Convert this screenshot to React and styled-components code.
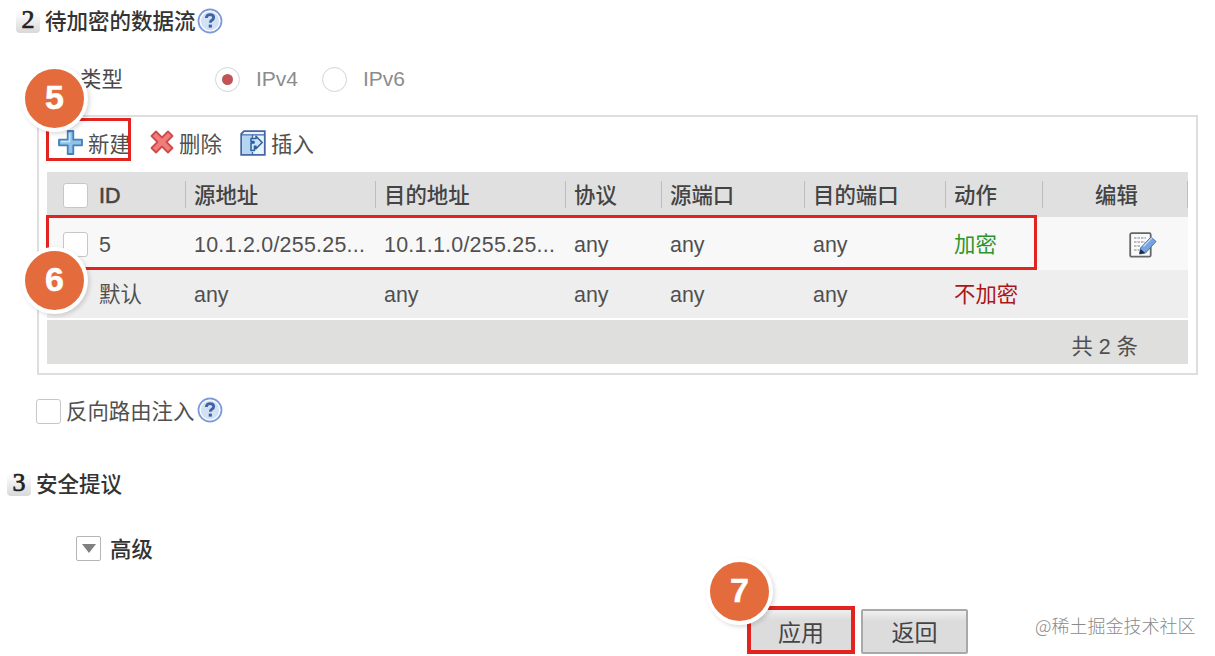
import React from 'react';
import styled, { createGlobalStyle, css } from 'styled-components';

const GlobalStyle = createGlobalStyle`
	* {
		box-sizing: border-box;
	}
	body {
		margin: 0;
		background: #fff;
		color: #505050;
		font-family: 'Liberation Sans', 'Noto Sans CJK SC', sans-serif;
		font-size: 21.4px;
		line-height: 30px;
	}
`;

const Page = styled.main`
	position: relative;
	width: 1215px;
	height: 656px;
	overflow: hidden;
`;

const SectionTitle = styled.h2`
	display: flex;
	align-items: center;
	height: 42px;
	margin: 0;
	padding: 1px 0 0 ${(props) => props.$indent}px;
	color: #333;
	font-size: 21.5px;
	font-weight: 500;
	white-space: nowrap;
	& > svg {
		margin: -1px 0 0 1px;
	}
`;

const StepNumber = styled.span`
	flex: none;
	width: 24px;
	height: 22px;
	margin-right: 5px;
	color: #222;
	font-family: 'Liberation Serif', serif;
	font-size: 26px;
	font-weight: 400;
	line-height: 18px;
	text-align: center;
	-webkit-text-stroke: 0.7px #222;
	background: linear-gradient(#fafafa 15%, #d8d8d8);
	border-radius: 4px;
`;

const TypeRow = styled.div`
	display: flex;
	align-items: center;
	height: 73px;
	padding: 1px 0 0 80px;
	color: #8c8c8c;
`;

const TypeLabel = styled.span`
	width: 135px;
	padding-top: 1px;
	color: #4a4a4a;
`;

const Radio = styled.span`
	display: grid;
	place-items: center;
	width: 25px;
	height: 25px;
	margin-right: 16px;
	border: 1.5px solid #d6d3d3;
	border-radius: 50%;
	&::after {
		content: '';
		width: 11px;
		height: 11px;
		border-radius: 50%;
		background: ${(props) => (props.$checked ? '#c25454' : 'transparent')};
	}
`;

const RadioLabel = styled.span`
	width: 66px;
	font-size: 21px;
`;

const Panel = styled.section`
	width: 1161px;
	height: 260px;
	margin-left: 37px;
	padding: 0 8px;
	border: 2px solid #dedede;
`;

const Toolbar = styled.div`
	display: flex;
	align-items: center;
	height: 55px;
	padding-left: 11px;
`;

const Tool = styled.span`
	display: flex;
	align-items: center;
	width: ${(props) => props.$width}px;
	white-space: nowrap;
	& > svg {
		flex: none;
		margin: -4px 5px 0 0;
	}
`;

const Row = styled.div`
	display: grid;
	grid-template-columns: 139px 190px 190px 96px 143px 141px 97px 145px;
	align-items: center;
	height: ${(props) => props.$height}px;
	background: ${(props) => props.$background};
`;

const Cell = styled.span`
	display: flex;
	align-items: center;
	padding: 2px 0 0 ${(props) => (props.$first ? 52 : 8)}px;
	color: ${(props) => props.$color || 'inherit'};
	white-space: nowrap;
	${(props) =>
		props.$check &&
		css`
			padding-left: 16px;
		`}
`;

const HeadCell = styled(Cell)`
	height: 27px;
	color: #444;
	font-weight: 500;
	border-right: 1px solid #bdbdbd;
	${(props) =>
		props.$center &&
		css`
			justify-content: center;
			padding-left: 3px;
		`}
`;

const IdLabel = styled.span`
	-webkit-text-stroke: 0.6px #444;
`;

const Address = styled.span`
	letter-spacing: 0.26px;
`;

const EditCell = styled.span`
	display: flex;
	justify-content: flex-end;
	padding: 3px 31px 0 0;
`;

const Checkbox = styled.span`
	flex: none;
	width: 25px;
	height: 25px;
	margin-right: ${(props) => props.$gap}px;
	background: #fff;
	border: 1.5px solid #c8c6c6;
	border-radius: 3px;
`;

const Footer = styled.div`
	display: flex;
	align-items: center;
	justify-content: flex-end;
	height: 44px;
	margin-top: 2px;
	padding: 9px 50px 0 0;
	background: #dfdfde;
`;

const OptionRow = styled.div`
	display: flex;
	align-items: center;
	height: 73px;
	margin-bottom: 15px;
	padding-left: 36px;
	& > svg {
		margin: -4px 0 0 3px;
	}
`;

const Advanced = styled.div`
	display: flex;
	align-items: center;
	height: 86px;
	padding-left: 76px;
	color: #333;
	font-weight: 500;
`;

const AdvancedLabel = styled.span`
	padding-top: 3px;
`;

const Toggle = styled.span`
	display: grid;
	place-items: center;
	width: 25px;
	height: 25px;
	margin-right: 9px;
	border: 1.5px solid #b5b5b5;
	border-radius: 2px;
	&::after {
		content: '';
		border: 7px solid transparent;
		border-top: 9px solid #808080;
		border-bottom: 0;
	}
`;

const Actions = styled.div`
	display: flex;
	align-items: flex-start;
	gap: 6px;
	padding: 15px 0 0 747px;
`;

const Button = styled.button`
	width: 108px;
	height: 48px;
	padding: 5px 0 0;
	color: #444;
	font: inherit;
	font-size: 23px;
	background: linear-gradient(#f0f0f0, #dcdcdc 25%);
	border: 4px solid #e2231f;
	${(props) =>
		!props.$marked &&
		css`
			width: 107px;
			height: 45px;
			margin-top: 3px;
			padding-top: 2px;
			border: 2px solid #a9a9a9;
			border-radius: 2px;
		`}
`;

const Watermark = styled.span`
	margin: 4px 0 0 61px;
	color: #8a8a8a;
	font-family: 'Noto Sans CJK SC', sans-serif;
	font-size: 18px;
	font-weight: 300;
	white-space: nowrap;
`;

// annotation overlays
const Outline = styled.div`
	position: absolute;
	left: ${(props) => props.$x}px;
	top: ${(props) => props.$y}px;
	width: ${(props) => props.$w}px;
	height: ${(props) => props.$h}px;
	border: 3px solid #e2231f;
`;

const Badge = styled.div`
	position: absolute;
	left: ${(props) => props.$x}px;
	top: ${(props) => props.$y}px;
	width: 67px;
	height: 67px;
	color: #fff;
	font-family: 'Liberation Sans', sans-serif;
	font-size: 34px;
	font-weight: 700;
	line-height: 57px;
	text-align: center;
	-webkit-text-stroke: 0.5px #fff;
	background: #e46c3c;
	border: 4px solid #fff;
	border-radius: 50%;
	box-shadow: 2px 2px 4px rgba(0, 0, 0, 0.14);
`;

const HelpIcon = () => (
	<svg width="26" height="26" viewBox="0 0 26 26">
		<circle cx="13" cy="13" r="11.5" fill="#d3e1f4" stroke="#7d9bd6" strokeWidth="1.8" />
		<circle cx="13" cy="13" r="9.8" fill="none" stroke="#f5faff" strokeWidth="1.3" />
		<path d="M9.3 10q.2-3.4 3.7-3.4 3.7 0 3.7 3 0 1.6-1.8 2.7-1.6 1-1.6 2.4" fill="none" stroke="#3f62a8" strokeWidth="2.8" />
		<rect x="11.7" y="16.6" width="3.2" height="3" fill="#3f62a8" />
	</svg>
);

const PlusIcon = () => (
	<svg width="25" height="25" viewBox="0 0 25 25">
		<path d="M9.7 1h5.6v8.7H24v5.6h-8.7V24H9.7v-8.7H1V9.7h8.7z" fill="#8fc4ea" stroke="#477fb6" strokeWidth="1.8" strokeLinejoin="round" />
		<path d="M11.5 3v8.5H3" fill="none" stroke="#c9e6f8" strokeWidth="1.5" />
	</svg>
);

const DeleteIcon = () => (
	<svg width="24" height="25" viewBox="0 0 24 25">
		<path d="M6 1.5l6 6 6-6 4.5 4.5-6 6 6 6-4.5 4.5-6-6-6 6L1.5 18l6-6-6-6z" fill="#f27c79" stroke="#cc4c4b" strokeWidth="1.8" strokeLinejoin="round" />
	</svg>
);

const InsertIcon = () => (
	<svg width="26" height="26" viewBox="0 0 26 26">
		<path d="M1.2 4L4 1.2h20.8v23.6H1.2z" fill="#eaf3fc" stroke="#4468a4" strokeWidth="1.8" />
		<path d="M2.2 5.5H12v18.4H2.2z" fill="#b4d5f1" />
		<path d="M1.5 4.8H24M12.5 5v4M12.5 22v3" fill="none" stroke="#4468a4" strokeWidth="1.3" />
		<path d="M11 8.5h5V6.200l6.200 6.300-6.200 6.300v-2.600h-1.500v4.300H11v-7.500h3v-1.500h-3z" fill="#c9e3f8" stroke="#2d5f9f" strokeWidth="1.5" strokeLinejoin="round" />
	</svg>
);

const EditIcon = () => (
	<svg width="28" height="26" viewBox="0 0 28 26">
		<rect x="1.2" y="1.2" width="20.5" height="23.5" rx="1.5" fill="#fafafa" stroke="#666" strokeWidth="1.8" />
		<path d="M5 6h12M5 10h11M5 14h7M5 18h5" stroke="#a5abb3" strokeWidth="1.4" strokeDasharray="2.5 1" />
		<path d="M11.5 16L22 5l5 4.5L16.500 21l-6 1z" fill="#76a4df" stroke="#4a71ad" strokeWidth="1" />
		<path d="M14.5 14.400l8.500-8.700" stroke="#b9d3f2" strokeWidth="1.5" />
		<path d="M11.500 17l4.500 4-5.500 1z" fill="#1f2b3d" />
	</svg>
);

const columns = ['源地址', '目的地址', '协议', '源端口', '目的端口', '动作'];

const rules = [
	{
		id: '5',
		values: ['10.1.2.0/255.25...', '10.1.1.0/255.25...', 'any', 'any', 'any'],
		action: '加密',
		color: '#2c962c',
		editable: true,
	},
	{
		id: '默认',
		values: ['any', 'any', 'any', 'any', 'any'],
		action: '不加密',
		color: '#ad1518',
	},
];

const RuleRow = ({ rule }) => (
	<Row
		$height={rule.editable ? 53 : 48}
		$background={rule.editable ? '#f8f8f8' : '#eeeeee'}
	>
		<Cell $check={rule.editable} $first>
			{rule.editable && <Checkbox $gap={11} />}
			{rule.id}
		</Cell>
		{rule.values.map((value, i) => (
			<Cell key={i}>
				{value === 'any' ? value : <Address>{value}</Address>}
			</Cell>
		))}
		<Cell $color={rule.color}>{rule.action}</Cell>
		<EditCell>{rule.editable && <EditIcon />}</EditCell>
	</Row>
);

const App = () => (
	<>
		<GlobalStyle />
		<Page>
			<SectionTitle $indent={16}>
				<StepNumber>2</StepNumber>
				待加密的数据流
				<HelpIcon />
			</SectionTitle>
			<TypeRow>
				<TypeLabel>类型</TypeLabel>
				<Radio $checked />
				<RadioLabel>IPv4</RadioLabel>
				<Radio />
				<RadioLabel>IPv6</RadioLabel>
			</TypeRow>

			<Panel>
				<Toolbar>
					<Tool $width={92}>
						<PlusIcon />
						新建
					</Tool>
					<Tool $width={90}>
						<DeleteIcon />
						删除
					</Tool>
					<Tool $width={80}>
						<InsertIcon />
						插入
					</Tool>
				</Toolbar>
				<Row $height={45} $background="#e0e0e0">
					<HeadCell $check>
						<Checkbox $gap={11} />
						<IdLabel>ID</IdLabel>
					</HeadCell>
					{columns.map((title) => (
						<HeadCell key={title}>{title}</HeadCell>
					))}
					<HeadCell $center>编辑</HeadCell>
				</Row>
				{rules.map((rule) => (
					<RuleRow key={rule.id} rule={rule} />
				))}
				<Footer>共 2 条</Footer>
			</Panel>

			<OptionRow>
				<Checkbox $gap={5} />
				反向路由注入
				<HelpIcon />
			</OptionRow>
			<SectionTitle $indent={7}>
				<StepNumber>3</StepNumber>
				安全提议
			</SectionTitle>
			<Advanced>
				<Toggle />
				<AdvancedLabel>高级</AdvancedLabel>
			</Advanced>
			<Actions>
				<Button $marked>应用</Button>
				<Button>返回</Button>
				<Watermark>@稀土掘金技术社区</Watermark>
			</Actions>

			<Outline $x={46} $y={118} $w={85} $h={43} />
			<Outline $x={46} $y={215} $w={991} $h={55} />
			<Badge $x={21} $y={65}>5</Badge>
			<Badge $x={21} $y={247}>6</Badge>
			<Badge $x={706} $y={558}>7</Badge>
		</Page>
	</>
);

export default App;
